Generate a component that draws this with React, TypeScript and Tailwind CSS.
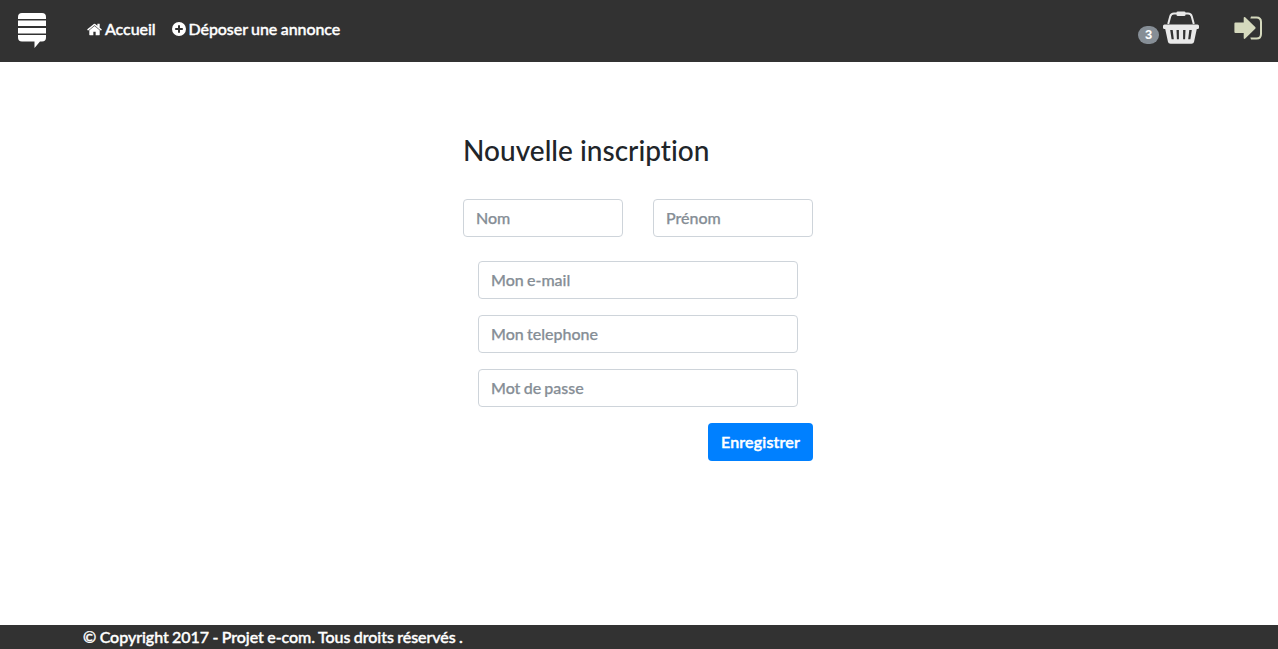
import type { ReactNode } from "react";

function Field({ label, type = "text" }: { label: string; type?: string }) {
  return (
    <input
      type={type}
      placeholder={label}
      aria-label={label}
      className="block h-[38px] w-full min-w-0 rounded border border-[#ced4da] bg-white px-3 pb-[2px] text-base text-[#495057] outline-none [-webkit-text-stroke:0.25px] [word-spacing:-0.8px] placeholder:text-[#868e96]"
    />
  );
}

function NavLink({ children }: { children: ReactNode }) {
  return <a href="#" className="flex items-center gap-[3px]">{children}</a>;
}

function LogoIcon() {
  return (
    <svg viewBox="0 0 28 35" className="h-[35px] w-7" fill="#fff">
      <path d="M4 0h20q4 0 4 4v2H0V4q0-4 4-4zM0 7.500h28v5.500H0zM0 15h28v5.500H0zM0 22h28v2.500q0 4-4 4h-2L16.500 35v-6.500H4q-4 0-4-4z" />
    </svg>
  );
}

function HomeIcon() {
  return (
    <svg viewBox="0 0 1664 1408" className="h-[13px] w-[15px]" fill="currentColor">
      <path d="M1408 800v480q0 26-19 45t-45 19H960V960H704v384H320q-26 0-45-19t-19-45V800q0-1 .5-3t.5-3l575-474 575 474q1 2 1 6zm223-69-62 74q-8 9-21 11h-3q-13 0-21-7L832 232 140 809q-12 8-24 7-13-2-21-11l-62-74q-8-10-7-23.500t11-21.500l719-599q32-26 76-26t76 26l244 204V96q0-14 9-23t23-9h192q14 0 23 9t9 23v408l219 182q10 8 11 21.500t-7 23.500z" />
    </svg>
  );
}

function PlusIcon() {
  return (
    <svg viewBox="0 0 14 14" className="size-[14px]" fill="currentColor">
      <path fillRule="evenodd" d="M7 0a7 7 0 1 1 0 14A7 7 0 0 1 7 0zM6 3.200V6H3.200v2H6v2.800h2V8h2.800V6H8V3.200z" />
    </svg>
  );
}

function BasketIcon() {
  return (
    <svg viewBox="0 0 36 33" className="h-[33px] w-9" fill="#e9e9e9">
      <path d="M5.200 13 7.200 5.500Q8 2.600 11 2.600h14q3 0 3.800 2.900l2 7.500" fill="none" stroke="#e9e9e9" strokeWidth="2" />
      <rect x="13.500" y="0.500" width="9" height="4.500" rx="1.300" />
      <rect x="0" y="13.500" width="36" height="4.500" rx="1.500" />
      <path fillRule="evenodd" d="M2 17h32l-3 14q-.4 1.700-2.500 1.700h-21Q5.400 32.700 5 31zM7.200 19l1.400 9.300h2.200L9.700 19zM13.500 19l.4 9.300h2V19zM20.100 19v9.300h2l.4-9.300zM26.300 19l-1.100 9.300h2.200L28.800 19z" />
    </svg>
  );
}

function SignInIcon() {
  return (
    <svg viewBox="0 0 28 24" className="h-6 w-7" fill="#d5d9bd">
      <path d="M1.400 6.500h8.300V2q0-1.800 1.500-.7l10 9.700q1 .9 0 1.800l-10 9.700q-1.500 1.100-1.500-.8V17H1.400q-1 0-1-1V7.500q0-1 1-1z" />
      <path d="M17 .5h5.500Q28 .5 28 6v12q0 5.500-5.500 5.500H17l-.7-2h6.200q3.500 0 3.500-3.500V6q0-3.500-3.500-3.500h-6.200z" />
    </svg>
  );
}

export default function App() {
  return (
    <div className="flex h-screen flex-col bg-white font-['Lato',sans-serif] text-base font-medium text-[#212529]">
      <header className="flex h-[62px] shrink-0 items-start bg-[#323232] text-white">
        <div className="ml-[18px] mt-[13px]"><LogoIcon /></div>
        <nav className="ml-[41px] mt-[17px] flex gap-4 leading-6 tracking-[-0.07px] [-webkit-text-stroke:0.4px]">
          <NavLink><HomeIcon />Accueil</NavLink>
          <NavLink><PlusIcon /><span className="[word-spacing:-0.5px]">Déposer une annonce</span></NavLink>
        </nav>
        <div className="ml-auto mr-4 flex">
          <span className="mt-[26px] flex h-[18px] w-[21px] items-center justify-center rounded-full bg-[#868e96] font-['Liberation_Sans',sans-serif] text-[13px] font-bold">3</span>
          <div className="ml-1 mt-[11px]"><BasketIcon /></div>
          <div className="ml-[35px] mt-4"><SignInIcon /></div>
        </div>
      </header>
      <main className="flex-1">
        <form className="ml-[463px] w-[350px] pt-[71px]">
          <h1 className="text-[28px] leading-[34px] tracking-[0.02px] [font-variant-ligatures:none]">Nouvelle inscription</h1>
          <div className="mt-8 grid grid-cols-2 gap-[30px]">
            <Field label="Nom" />
            <Field label="Prénom" />
          </div>
          <div className="mt-6 grid gap-4 px-[15px]">
            <Field label="Mon e-mail" type="email" />
            <Field label="Mon telephone" type="tel" />
            <Field label="Mot de passe" type="password" />
          </div>
          <button type="button" className="ml-auto mt-4 block h-[38px] w-[105px] rounded bg-[#0080ff] tracking-[0.2px] text-white [-webkit-text-stroke:0.5px]">Enregistrer</button>
        </form>
      </main>
      <footer className="h-6 shrink-0 bg-[#323232] pl-[83px] leading-6 tracking-[-0.04px] text-white [-webkit-text-stroke:0.4px] [word-spacing:-0.6px]">© Copyright 2017 - Projet e-com. Tous droits réservés .</footer>
    </div>
  );
}
